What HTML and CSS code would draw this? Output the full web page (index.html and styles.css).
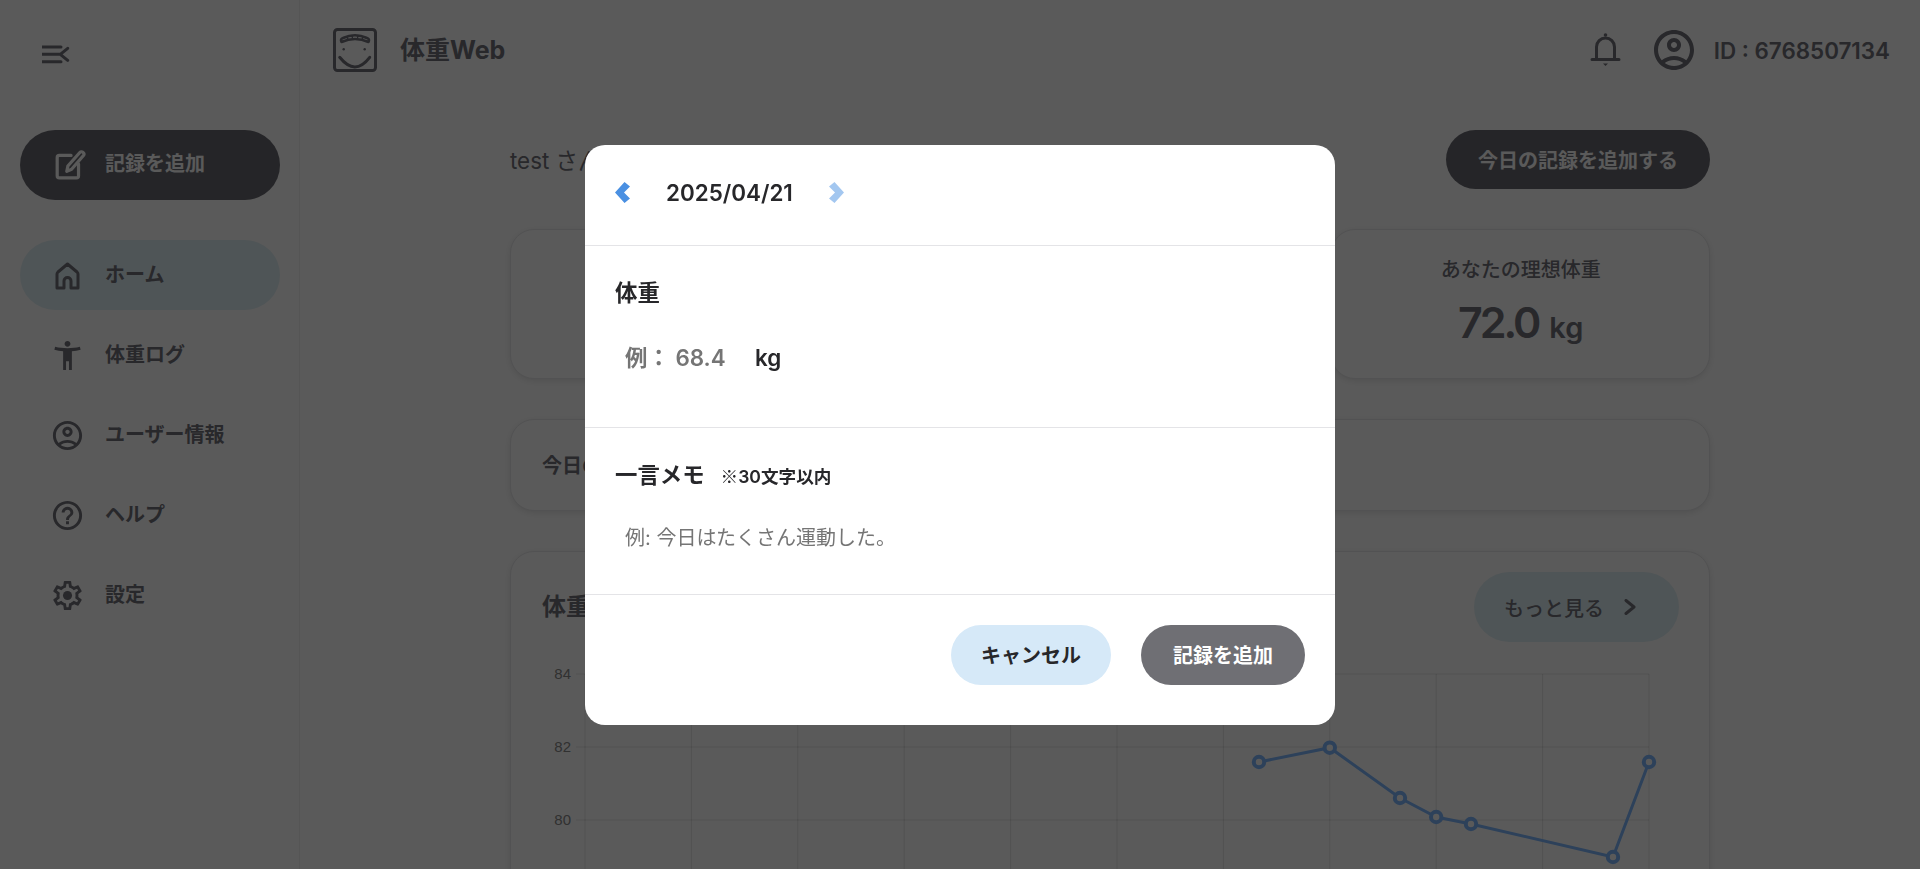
FILE: index.html
```html
<!DOCTYPE html>
<html lang="ja">
<head>
<meta charset="utf-8">
<title>体重Web</title>
<link rel="stylesheet" href="styles.css">
</head>
<body>
<div class="app">
  <aside class="sidebar">
    <div class="side-top">
      <svg class="menu-icon" viewBox="0 0 30 20" width="30" height="20"><path class="line" d="M0 2h19M0 9.300h19M0 16.700h19M25.700 3.300 18.300 9.300l7.400 6"/></svg>
    </div>
    <button class="add-record">
      <svg viewBox="0 0 30 30" width="32" height="32"><path class="line" d="M16 6H5a2 2 0 0 0-2 2v17a2 2 0 0 0 2 2h16a2 2 0 0 0 2-2V14"/><path class="line" d="M12 21l1-5L24 3.500a2.100 2.100 0 0 1 3.600 2.600L16.500 19z"/></svg>
      <span>記録を追加</span>
    </button>
    <nav class="nav">
      <a class="nav-item active">
        <svg viewBox="0 0 35 35" width="35" height="35"><path class="line" d="M7 30V16q0-1 1-2l9.500-8L27 14q1 1 1 2v14h-7v-7a3.500 3.500 0 0 0-7 0v7z"/></svg>
        <span>ホーム</span>
      </a>
      <a class="nav-item">
        <svg viewBox="0 0 24 24" width="35" height="35"><path class="fill" d="M20.500 6c-2.610.7-5.670 1-8.500 1s-5.890-.3-8.500-1L3 8c1.860.5 4 .83 6 1v13h2v-6h2v6h2V9c2-.17 4.140-.5 6-1zM12 6c1.100 0 2-.9 2-2s-.9-2-2-2-2 .9-2 2 .9 2 2 2"/></svg>
        <span>体重ログ</span>
      </a>
      <a class="nav-item">
        <svg viewBox="0 0 24 24" width="35" height="35"><path class="fill" d="M12 2C6.480 2 2 6.480 2 12s4.480 10 10 10 10-4.480 10-10S17.520 2 12 2M7.350 18.500C8.660 17.560 10.260 17 12 17s3.340.56 4.650 1.500c-1.310.94-2.910 1.500-4.650 1.500s-3.340-.56-4.650-1.500m10.790-1.380C16.450 15.800 14.320 15 12 15s-4.450.8-6.140 2.120C4.700 15.730 4 13.950 4 12c0-4.420 3.580-8 8-8s8 3.580 8 8c0 1.950-.7 3.730-1.860 5.120"/><path class="fill" d="M12 6c-1.930 0-3.500 1.570-3.500 3.500S10.070 13 12 13s3.500-1.570 3.500-3.500S13.930 6 12 6m0 5c-.83 0-1.500-.67-1.500-1.500S11.170 8 12 8s1.500.67 1.500 1.500S12.830 11 12 11"/></svg>
        <span>ユーザー情報</span>
      </a>
      <a class="nav-item">
        <svg viewBox="0 0 24 24" width="35" height="35"><path class="fill" d="M11 18h2v-2h-2zm1-16C6.480 2 2 6.480 2 12s4.480 10 10 10 10-4.480 10-10S17.520 2 12 2m0 18c-4.410 0-8-3.590-8-8s3.590-8 8-8 8 3.590 8 8-3.590 8-8 8m0-14c-2.210 0-4 1.790-4 4h2c0-1.100.9-2 2-2s2 .9 2 2c0 2-3 1.750-3 5h2c0-2.250 3-2.500 3-5 0-2.210-1.790-4-4-4"/></svg>
        <span>ヘルプ</span>
      </a>
      <a class="nav-item">
        <svg viewBox="0 0 24 24" width="35" height="35"><path class="fill" d="M19.430 12.980c.04-.32.07-.64.07-.98 0-.34-.03-.66-.07-.98l2.110-1.650c.19-.15.24-.42.12-.64l-2-3.460c-.09-.16-.26-.25-.44-.25-.06 0-.12.01-.17.03l-2.490 1c-.52-.4-1.080-.73-1.690-.98l-.38-2.650C14.460 2.180 14.250 2 14 2h-4c-.25 0-.46.18-.49.42l-.38 2.650c-.61.25-1.170.59-1.690.98l-2.490-1c-.06-.02-.12-.03-.18-.03-.17 0-.34.09-.43.25l-2 3.460c-.13.22-.07.49.12.64l2.110 1.650c-.04.32-.07.65-.07.98 0 .33.03.66.07.98l-2.110 1.650c-.19.15-.24.42-.12.64l2 3.460c.09.16.26.25.44.25.06 0 .12-.01.17-.03l2.490-1c.52.4 1.080.73 1.690.98l.38 2.650c.03.24.24.42.49.42h4c.25 0 .46-.18.49-.42l.38-2.650c.61-.25 1.170-.59 1.690-.98l2.490 1c.06.02.12.03.18.03.17 0 .34-.09.43-.25l2-3.460c.12-.22.07-.49-.12-.64zm-1.980-1.710c.04.31.05.52.05.73 0 .21-.02.43-.05.73l-.14 1.130.89.7 1.080.84-.7 1.210-1.270-.51-1.040-.42-.9.68c-.43.32-.84.56-1.250.73l-1.060.43-.16 1.130-.2 1.350h-1.400l-.19-1.350-.16-1.130-1.060-.43c-.43-.18-.83-.41-1.230-.71l-.91-.7-1.060.43-1.270.51-.7-1.210 1.080-.84.89-.7-.14-1.130c-.03-.31-.05-.54-.05-.74s.02-.43.05-.73l.14-1.130-.89-.7-1.080-.84.7-1.210 1.270.51 1.040.42.9-.68c.43-.32.84-.56 1.250-.73l1.060-.43.16-1.130.2-1.350h1.390l.19 1.350.16 1.130 1.060.43c.43.18.83.41 1.230.71l.91.7 1.060-.43 1.270-.51.7 1.210-1.070.85-.89.7z"/><circle class="fill" cx="12" cy="12" r="3.100"/></svg>
        <span>設定</span>
      </a>
    </nav>
  </aside>

  <div class="main">
    <header class="topbar">
      <div class="brand">
        <svg viewBox="0 0 44 44" width="44" height="44">
          <rect class="line" x="1.500" y="1.500" width="41" height="41" rx="3"/>
          <path class="line thin" d="M8.500 14Q7 11 10 10 22 4.500 34 10q3 1 1.500 4Q22 8 8.500 14z"/>
          <path class="line tick" d="M14 9l.8 2M19 7.500l.4 2M25 7.500l-.4 2M30 9l-.8 2"/>
          <circle class="fill" cx="10.700" cy="21.300" r="1.200"/>
          <circle class="fill" cx="31.700" cy="21.300" r="1.200"/>
          <path class="line" d="M6.700 29.300Q22 48.500 36.700 29.300"/>
        </svg>
        <span class="brand-name">体重Web</span>
      </div>
      <div class="top-right">
        <svg viewBox="0 0 40 40" width="40" height="40"><circle class="fill" cx="19.500" cy="5" r="1.800"/><path class="line" d="M10.500 29V17a9 9 0 0 1 18 0v12M6 29.500h27"/><path class="fill" d="M17 33.500h5l-2.500 2.500z"/></svg>
        <svg class="user-icon" viewBox="0 0 24 24" width="48" height="48"><path class="fill" d="M12 2C6.480 2 2 6.480 2 12s4.480 10 10 10 10-4.480 10-10S17.520 2 12 2M7.350 18.500C8.660 17.560 10.260 17 12 17s3.340.56 4.650 1.500c-1.310.94-2.910 1.500-4.650 1.500s-3.340-.56-4.650-1.500m10.790-1.380C16.450 15.800 14.320 15 12 15s-4.450.8-6.140 2.120C4.700 15.730 4 13.950 4 12c0-4.420 3.580-8 8-8s8 3.580 8 8c0 1.950-.7 3.730-1.860 5.120"/><path class="fill" d="M12 6c-1.930 0-3.500 1.570-3.500 3.500S10.070 13 12 13s3.500-1.570 3.500-3.500S13.930 6 12 6m0 5c-.83 0-1.500-.67-1.500-1.500S11.170 8 12 8s1.500.67 1.500 1.500S12.830 11 12 11"/></svg>
        <span class="user-id">ID : 6768507134</span>
      </div>
    </header>

    <main class="content">
      <div class="greeting-row">
        <p class="greeting">test さん</p>
        <button class="today-btn">今日の記録を追加する</button>
      </div>

      <section class="stats">
        <div class="card stat"></div>
        <div class="card stat"></div>
        <div class="card stat">
          <p class="stat-label">あなたの理想体重</p>
          <p class="stat-value">72.0 <small>kg</small></p>
        </div>
      </section>

      <section class="card memo-card"><span>今日の</span></section>

      <section class="card chart-card">
        <div class="chart-head">
          <h2>体重</h2>
          <button class="more-btn">
            <span>もっと見る</span>
            <svg viewBox="0 0 12 16" width="12" height="16"><path class="line" d="M2 1.500 10 8l-8 6.500"/></svg>
          </button>
        </div>
        <svg class="chart" viewBox="0 0 1136 240" width="1136" height="240">
          <g class="grid">
            <path d="M34 14H1107M34 87H1107M34 160H1107M34 233H1107"/>
            <path d="M43 14V240M149.400 14V240M255.800 14V240M362.200 14V240M468.600 14V240M575 14V240M681.400 14V240M787.800 14V240M894.200 14V240M1000.600 14V240M1107 14V240"/>
          </g>
          <g class="axis">
            <text x="29" y="19">84</text>
            <text x="29" y="92">82</text>
            <text x="29" y="165">80</text>
          </g>
          <polyline class="series" points="717,102 787.800,87.700 858,138 894.200,157 929,164 1071,197 1107,102"/>
          <g class="dots">
            <circle cx="717" cy="102" r="5.200"/>
            <circle cx="787.800" cy="87.700" r="5.200"/>
            <circle cx="858" cy="138" r="5.200"/>
            <circle cx="894.200" cy="157" r="5.200"/>
            <circle cx="929" cy="164" r="5.200"/>
            <circle cx="1071" cy="197" r="5.200"/>
            <circle cx="1107" cy="102" r="5.200"/>
          </g>
        </svg>
      </section>
    </main>
  </div>
</div>

<div class="overlay">
  <div class="modal">
    <div class="modal-head">
      <button class="nav-arrow"><svg viewBox="0 0 15 21" width="15" height="21"><path class="arrow-shape" d="M9.500 0 15 4.500 9 10.500l6 6L9.500 21 0 10.500z"/></svg></button>
      <span class="date">2025/04/21</span>
      <button class="nav-arrow faded"><svg viewBox="0 0 15 21" width="15" height="21"><path class="arrow-shape" d="M5.500 0 0 4.500 6 10.500l-6 6L5.500 21 15 10.500z"/></svg></button>
    </div>
    <div class="modal-section weight-section">
      <div class="field-label">体重</div>
      <div class="weight-row">
        <input class="weight-input" type="text" placeholder="例： 68.4">
        <span class="unit">kg</span>
      </div>
    </div>
    <div class="modal-section memo-section">
      <div class="field-label">一言メモ<small><span class="ref-mark">※</span>30文字以内</small></div>
      <input class="memo-input" type="text" placeholder="例: 今日はたくさん運動した。">
    </div>
    <div class="modal-foot">
      <button class="btn cancel">キャンセル</button>
      <button class="btn submit">記録を追加</button>
    </div>
  </div>
</div>
</body>
</html>
```

FILE: styles.css
```css
* { box-sizing: border-box; }
html, body { height: 100%; margin: 0; overflow: hidden; }
body {
  font-family: Inter, "Noto Sans CJK JP", sans-serif;
  color: #71717a;
  background: #fff;
}
p, h2 { margin: 0; }
button { font-family: inherit; border: 0; cursor: pointer; }
svg { display: block; flex: none; }

.line { fill: none; stroke: currentColor; stroke-width: 3; stroke-linejoin: round; stroke-linecap: round; }
.line.thin { stroke-width: 2.600; }
.line.tick { stroke-width: 1.400; }
.fill { fill: currentColor; }

.app { display: flex; height: 100%; }

.sidebar {
  width: 300px;
  flex: none;
  padding: 0 19px 0 20px;
  border-right: 1px solid #f0f0f0;
}
.side-top { height: 130px; padding: 45px 0 0 22px; }
.add-record {
  width: 260px;
  height: 70px;
  display: flex;
  align-items: center;
  gap: 19px;
  padding-left: 34px;
  border-radius: 35px;
  background: #6a6a72;
  color: #fff;
  font-size: 20px;
  font-weight: 700;
}
.add-record span { margin-bottom: 5px; }
.nav { display: flex; flex-direction: column; gap: 10px; margin-top: 40px; }
.nav-item {
  width: 260px;
  height: 70px;
  display: flex;
  align-items: center;
  gap: 20px;
  padding-left: 30px;
  border-radius: 35px;
  font-size: 20px;
  font-weight: 600;
}
.nav-item span { margin-bottom: 3px; }
.nav-item.active { background: #e1f0f5; }

.main { flex: 1; min-width: 0; }
.topbar {
  height: 100px;
  display: flex;
  align-items: center;
  justify-content: space-between;
  padding: 0 30px 0 33px;
}
.brand { display: flex; align-items: center; gap: 23px; }
.brand-name { font-size: 25px; font-weight: 700; margin-bottom: 5px; }
.top-right { display: flex; align-items: center; }
.user-icon { margin-left: 24px; }
.user-id { margin-left: 16px; font-size: 22.400px; font-weight: 600; }

.content { width: 1200px; margin: 0 auto; padding-top: 30px; display: flex; flex-direction: column; gap: 40px; }
.greeting-row { height: 59px; display: flex; align-items: center; justify-content: space-between; }
.greeting { font-size: 22.400px; margin-bottom: 2px; }
.today-btn {
  height: 59px;
  width: 264px;
  border-radius: 30px;
  background: #6a6a72;
  color: #fff;
  font-size: 20px;
  font-weight: 700;
}

.card {
  background: #fff;
  border: 1px solid #e8e8ea;
  border-radius: 24px;
  box-shadow: 0 2px 6px rgba(0, 0, 0, .1);
}
.stats { display: grid; grid-template-columns: repeat(3, 1fr); gap: 32px; height: 150px; }
.stat { display: flex; flex-direction: column; align-items: center; padding-top: 25px; }
.stat-label { font-size: 20px; font-weight: 500; line-height: 30px; }
.stat-value { font-size: 43px; font-weight: 600; line-height: 50px; margin-top: 12px; letter-spacing: -3px; }
.stat-value small { font-size: 29px; letter-spacing: 0; margin-left: 3px; }

.memo-card { height: 92px; display: flex; align-items: center; padding-left: 31px; font-size: 20px; font-weight: 600; }
.memo-card span { margin-bottom: 2px; }

.chart-card { height: 400px; padding: 20px 30px 0 31px; }
.chart-head { display: flex; justify-content: space-between; align-items: center; height: 70px; }
.chart-head h2 { font-size: 24px; font-weight: 700; margin-bottom: 5px; }
.more-btn {
  width: 205px;
  height: 70px;
  display: flex;
  align-items: center;
  gap: 20px;
  padding-left: 30px;
  border-radius: 35px;
  background: #e1f0f5;
  color: #71717a;
  font-size: 20px;
  font-weight: 500;
}
.chart { margin-top: 18px; }
.grid path { fill: none; stroke: rgba(0, 0, 0, .1); stroke-width: 1; }
.axis text { font-family: "Liberation Sans", sans-serif; font-size: 15px; fill: #8a8a8a; text-anchor: end; }
.series { fill: none; stroke: #7fb8ff; stroke-width: 3; }
.dots circle { fill: #fff; stroke: #7fb8ff; stroke-width: 4; }

.overlay {
  position: fixed;
  inset: 0;
  display: flex;
  align-items: center;
  justify-content: center;
  background: rgba(0, 0, 0, .647);
}
.modal {
  width: 750px;
  height: 580px;
  background: #fff;
  color: #27272a;
  border-radius: 20px;
  overflow: hidden;
  display: flex;
  flex-direction: column;
}
.modal-head {
  height: 101px;
  flex: none;
  display: flex;
  align-items: center;
  gap: 36px;
  padding: 0 30px 5px;
  border-bottom: 1px solid #e4e4e7;
}
.nav-arrow { background: none; padding: 0; color: #4a90e2; }
.nav-arrow.faded { opacity: .5; }
.arrow-shape { fill: currentColor; }
.date { font-size: 22.400px; font-weight: 600; }
.modal-section { padding: 32px 30px 0; border-bottom: 1px solid #e4e4e7; flex: none; }
.weight-section { height: 182px; }
.memo-section { height: 167px; }
.field-label { font-size: 22.400px; font-weight: 700; line-height: 30px; display: flex; align-items: baseline; }
.field-label small { font-size: 17.600px; font-weight: 600; margin-left: 16px; }
.ref-mark { font-family: "Noto Sans CJK JP", sans-serif; font-weight: 400; }
.weight-row { display: flex; align-items: center; gap: 10px; margin-top: 25px; height: 50px; }
input {
  border: 0;
  outline: 0;
  padding: 0 0 0 10px;
  height: 50px;
  font-family: inherit;
  font-size: 22.400px;
  color: #27272a;
  background: transparent;
}
input::placeholder { color: #757575; opacity: 1; }
.weight-input { width: 130px; font-weight: 600; }
.unit { font-size: 22.400px; font-weight: 600; }
.memo-input { width: 100%; margin-top: 21px; font-size: 20px; }
.modal-foot { flex: 1; display: flex; justify-content: flex-end; gap: 30px; padding: 30px; }
.btn { height: 60px; border-radius: 30px; font-size: 20px; font-weight: 700; }
.btn.cancel { width: 160px; background: #d6e9f8; color: #27272a; }
.btn.submit { width: 164px; background: #6f6f74; color: #fff; }
```
